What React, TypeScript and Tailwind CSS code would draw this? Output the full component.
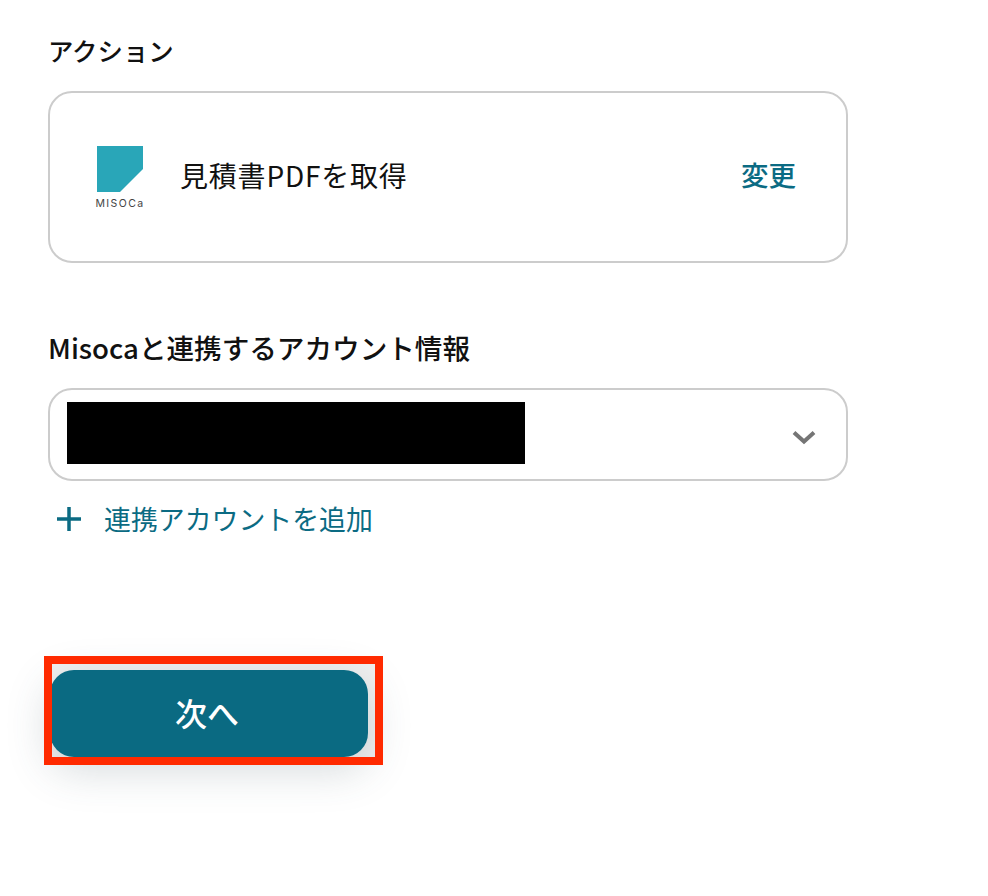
const font = { fontFamily: '"Noto Sans CJK JP", "Noto Sans", sans-serif' };

const MisocaLogo = () => (
    <div className="flex w-[46px] flex-col items-center">
        <svg width="46" height="46" viewBox="0 0 46 46" className="block">
            <polygon points="0,0 46,0 46,23 23,46 0,46" fill="#29a6b8" />
        </svg>
        <span className="mt-[5px] -mb-[2px] whitespace-nowrap text-[10.5px] leading-[14px] tracking-[1.4px] text-[#444] [font-family:Inter,sans-serif]">
            MISOCa
        </span>
    </div>
);

export default function App() {
    return (
        <div className="min-h-[896px] w-[988px] bg-white pl-12 pt-[32px] text-[#111]" style={font}>
            <div className="w-[800px]">
                <p className="text-[25.4px] leading-[36px] font-medium">アクション</p>
                <div className="mt-[23px] flex h-[172px] items-center rounded-[24px] border-2 border-[#ccc] pl-[47px] pr-[50px]">
                    <MisocaLogo />
                    <span className="mb-[5px] ml-[37px] text-[28px] tracking-[0.8px]">見積書PDFを取得</span>
                    <span className="mb-[4px] ml-auto text-[27.5px] font-medium text-[#0b6b83]">変更</span>
                </div>
                <p className="mt-[66px] text-[27.6px] leading-[36px] font-medium">Misocaと連携するアカウント情報</p>
                <div className="mt-[23px] flex h-[93px] justify-between rounded-[24px] border-2 border-[#ccc] pl-[17px] pr-[30px]">
                    <div className="mt-[12px] h-[62px] w-[458px] bg-black" />
                    <svg width="24" height="16" viewBox="0 0 24 16" className="mt-[39px]">
                        <path d="M2 3.5 L12 12.5 L22 3.5" fill="none" stroke="#757575" strokeWidth="4" />
                    </svg>
                </div>
                <div className="mt-[19px] flex items-center text-[#0b6b83]">
                    <svg width="26" height="26" viewBox="0 0 26 26" className="ml-[8px]">
                        <path d="M13 1 V25 M1 13 H25" fill="none" stroke="#0b6b83" strokeWidth="3.5" />
                    </svg>
                    <span className="ml-[22px] text-[26.9px] leading-[38px]">連携アカウントを追加</span>
                </div>
            </div>
            <div className="relative mt-[132px] ml-[2px] w-[318px]">
                <div className="absolute -left-[6px] -top-[14px] h-[109px] w-[339px] bg-[#f0f0f0]" />
                <div className="relative flex h-[87px] items-center justify-center rounded-[24px] bg-[#0a6a82] pb-[3px] pr-[4px] text-[32px] font-medium text-white shadow-[0_12px_44px_rgba(60,80,90,0.22)]">
                    次へ
                </div>
                <div className="absolute -left-[6px] -top-[14px] h-[109px] w-[339px] border-[8px] border-[#ff2a00]" />
            </div>
        </div>
    );
}
